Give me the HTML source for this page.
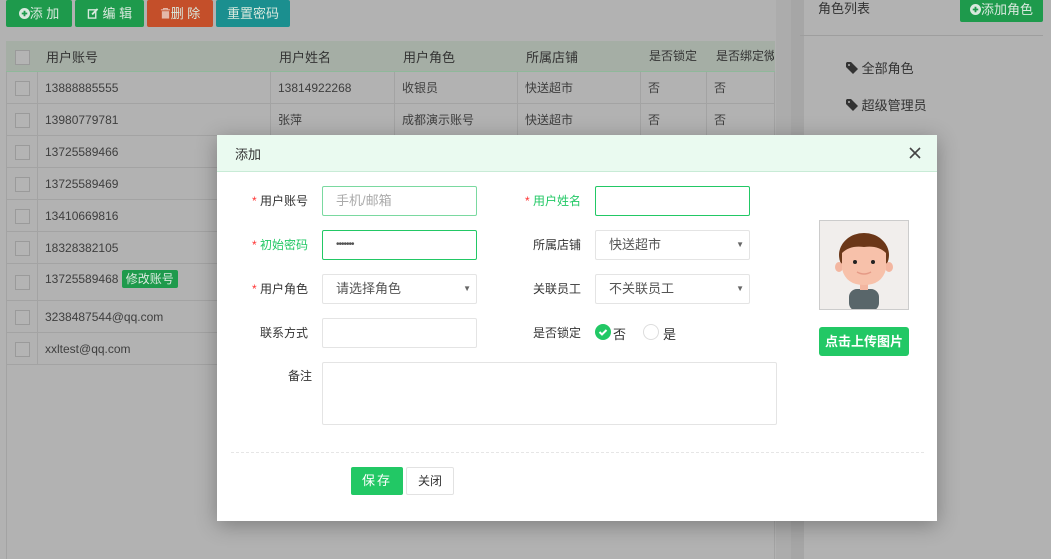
<!DOCTYPE html>
<html><head><meta charset="utf-8"><style>
*{box-sizing:border-box;margin:0;padding:0}
body{width:1051px;height:559px;overflow:hidden;background:#b2b2b2;font-family:"Liberation Sans","Noto Sans CJK SC",sans-serif;font-size:12px;color:#333;position:relative}
.a{position:absolute}
.btn{position:absolute;color:#d9e9de;font-size:13px;border-radius:2px;text-align:center;line-height:27px;height:27px;top:0}
.cell{position:absolute;height:32px;line-height:32px;border-right:1px solid #a3a3a3;border-bottom:1px solid #a3a3a3;color:#3e3e3e;padding-left:7px;white-space:nowrap;overflow:hidden}
.cb{position:absolute;width:15px;height:15px;border:1px solid #9a9a9a;background:#b4b4b4}
.lbl{position:absolute;text-align:right;width:90px;color:#333;font-size:12px;line-height:30px}
.in{position:absolute;width:155px;height:30px;border:1px solid #e4e4e4;border-radius:2px;background:#fff;line-height:28px;padding-left:13px;font-size:13px;color:#555}
.g{border-color:#22c865}
.arr{position:absolute;right:5px;top:0;font-size:8px;color:#666}
.st{color:#f33}
svg.i{vertical-align:-1px}
</style></head><body>
<!-- toolbar -->
<div class="btn" style="left:6px;width:66px;background:#1e9a4c"><svg class="i" width="11" height="11" viewBox="0 0 12 12"><circle cx="6" cy="6" r="6" fill="#d9e9de"/><path d="M3 6h6M6 3v6" stroke="#1e9a4c" stroke-width="2"/></svg>添 加</div>
<div class="btn" style="left:75px;width:69px;background:#1e9a4c"><svg class="i" width="12" height="11" viewBox="0 0 12 12"><rect x="1" y="2" width="8" height="9" fill="none" stroke="#d9e9de" stroke-width="1.5"/><path d="M5 7l6-6" stroke="#d9e9de" stroke-width="2"/></svg> 编 辑</div>
<div class="btn" style="left:147px;width:66px;background:#c44f2a"><svg class="i" width="11" height="11" viewBox="0 0 12 12"><path d="M1 2h10M4 2V0.5h4V2" stroke="#e4b8aa" stroke-width="1.3" fill="none"/><rect x="2" y="3.5" width="8" height="8" fill="#e4b8aa"/></svg>删 除</div>
<div class="btn" style="left:216px;width:74px;background:#1b8f8f">重置密码</div>

<!-- table -->
<div class="a" style="left:6px;top:41px;width:769px;height:518px;border-left:1px solid #a3a3a3;border-right:1px solid #a3a3a3"></div>
<div class="a" style="left:6px;top:41px;width:769px;height:31px;background:#a5aea5;border-bottom:1px solid #8fb89a"></div>
<div class="cb" style="left:15px;top:50px"></div>
<div class="a" style="left:46px;top:47px;color:#333;font-size:13px">用户账号</div>
<div class="a" style="left:279px;top:47px;color:#333;font-size:13px">用户姓名</div>
<div class="a" style="left:403px;top:47px;color:#333;font-size:13px">用户角色</div>
<div class="a" style="left:526px;top:47px;color:#333;font-size:13px">所属店铺</div>
<div class="a" style="left:649px;top:47px;color:#333;font-size:12px">是否锁定</div>
<div class="a" style="left:716px;top:47px;color:#333;font-size:12px;width:58px;overflow:hidden;white-space:nowrap">是否绑定微信</div>

<div id="rows"></div>
<script>
var d=[["13888885555","13814922268","收银员","快送超市","否","否"],["13980779781","张萍","成都演示账号","快送超市","否","否"],["13725589466","","","","",""],["13725589469","","","","",""],["13410669816","","","","",""],["18328382105","","","","",""],["13725589468","","","","",""],["3238487544@qq.com","","","","",""],["xxltest@qq.com","","","","",""]];
var cols=[6,38,271,395,518,641,707,775],tops=[72,104,136,168,200,232,264,301,333,365],h="";
for(var r=0;r<9;r++){var t=tops[r],hh=tops[r+1]-t;
h+='<div class="cell" style="left:6px;top:'+t+'px;width:32px;height:'+hh+'px;border-left:1px solid #a3a3a3"></div><div class="cb" style="left:15px;top:'+(t+(hh-15)/2)+'px"></div>';
for(var c=0;c<6;c++){h+='<div class="cell" style="left:'+cols[c+1]+'px;top:'+t+'px;width:'+(cols[c+2]-cols[c+1])+'px;height:'+hh+'px;line-height:'+(r==6?30:32)+'px">'+d[r][c]+(r==6&&c==0?' <span style="background:#1e9a4c;color:#d9e9de;padding:2px 4px;border-radius:2px;font-size:12px">修改账号</span>':'')+'</div>';}}
document.getElementById('rows').innerHTML=h;
</script>

<!-- right panel -->
<div class="a" style="left:776px;top:0;width:15px;height:559px;background:#acacac"></div>
<div class="a" style="left:791px;top:0;width:13px;height:559px;background:#a6a6a6"></div>
<div class="a" style="left:818px;top:-2px;font-size:13px;color:#333">角色列表</div>
<div class="a" style="left:960px;top:-4px;width:83px;height:26px;background:#1e9a4c;border-radius:2px;color:#d9e9de;font-size:13px;line-height:24px;text-align:center;padding-top:2px"><svg class="i" width="11" height="11" viewBox="0 0 12 12"><circle cx="6" cy="6" r="6" fill="#d9e9de"/><path d="M3 6h6M6 3v6" stroke="#1e9a4c" stroke-width="2"/></svg>添加角色</div>
<div class="a" style="left:800px;top:35px;width:243px;height:1px;background:#9e9e9e"></div>
<div class="a" style="left:846px;top:58px;font-size:13px;color:#333"><svg class="i" width="12" height="12" viewBox="0 0 12 12"><path d="M0 1v4l7 7 5-5-7-7H1z" fill="#333"/><circle cx="3" cy="3" r="1" fill="#b2b2b2"/></svg> 全部角色</div>
<div class="a" style="left:846px;top:95px;font-size:13px;color:#333"><svg class="i" width="12" height="12" viewBox="0 0 12 12"><path d="M0 1v4l7 7 5-5-7-7H1z" fill="#333"/><circle cx="3" cy="3" r="1" fill="#b2b2b2"/></svg> 超级管理员</div>

<!-- modal -->
<div class="a" style="left:217px;top:135px;width:720px;height:386px;background:#fff;box-shadow:0 4px 20px rgba(0,0,0,.3)">
 <div class="a" style="left:0;top:0;width:720px;height:37px;background:#eafaf0;border-bottom:1px solid #c8ebd6"></div>
 <div class="a" style="left:18px;top:9px;font-size:13px;color:#333">添加</div>
 <svg class="a" style="left:692px;top:12px" width="12" height="12" viewBox="0 0 12 12"><path d="M1 1l10 10M11 1L1 11" stroke="#444" stroke-width="1.6"/></svg>

 <div class="lbl" style="left:1px;top:51px"><span class="st">*</span> 用户账号</div>
 <div class="in" style="left:105px;top:51px;border-color:#7ad9a0;color:#aaa">手机/邮箱</div>
 <div class="lbl" style="left:274px;top:51px;color:#22c865"><span class="st">*</span> 用户姓名</div>
 <div class="in g" style="left:378px;top:51px"></div>

 <div class="lbl" style="left:1px;top:95px;color:#22c865"><span class="st">*</span> 初始密码</div>
 <div class="in g" style="left:105px;top:95px;font-size:10px;letter-spacing:-1px">•••••••</div>
 <div class="lbl" style="left:274px;top:95px">所属店铺</div>
 <div class="in" style="left:378px;top:95px">快送超市<span class="arr">▼</span></div>

 <div class="lbl" style="left:1px;top:139px"><span class="st">*</span> 用户角色</div>
 <div class="in" style="left:105px;top:139px">请选择角色<span class="arr">▼</span></div>
 <div class="lbl" style="left:274px;top:139px">关联员工</div>
 <div class="in" style="left:378px;top:139px">不关联员工<span class="arr">▼</span></div>

 <div class="lbl" style="left:1px;top:183px">联系方式</div>
 <div class="in" style="left:105px;top:183px"></div>
 <div class="lbl" style="left:274px;top:183px">是否锁定</div>
 <svg class="a" style="left:378px;top:189px" width="16" height="16" viewBox="0 0 16 16"><circle cx="8" cy="8" r="8" fill="#22c865"/><path d="M4.5 8l2.5 2.5 4.5-4.5" stroke="#fff" stroke-width="2" fill="none"/></svg>
 <div class="a" style="left:396px;top:189px;font-size:13px;color:#333">否</div>
 <div class="a" style="left:426px;top:189px;width:16px;height:16px;border-radius:50%;border:1px solid #ddd"></div>
 <div class="a" style="left:446px;top:189px;font-size:13px;color:#333">是</div>

 <div class="lbl" style="left:5px;top:226px">备注</div>
 <div class="in" style="left:105px;top:227px;width:455px;height:63px"></div>

 <div class="a" style="left:14px;top:317px;width:693px;border-top:1px dashed #e6e6e6"></div>
 <div class="a" style="left:134px;top:332px;width:52px;height:28px;background:#22c865;border-radius:2px;color:#fff;font-size:13px;line-height:28px;text-align:center;letter-spacing:2px">保存</div>
 <div class="a" style="left:189px;top:332px;width:48px;height:28px;border:1px solid #e2e2e2;border-radius:2px;color:#333;font-size:12px;line-height:26px;text-align:center">关闭</div>

 <div class="a" style="left:602px;top:85px;width:90px;height:90px;border:1px solid #ccc;background:#f1eeec;overflow:hidden">
  <svg width="88" height="88" viewBox="0 0 88 88">
   <rect x="29" y="68" width="30" height="22" rx="8" fill="#59666a"/>
   <rect x="40" y="56" width="8" height="13" fill="#f3b6a0"/>
   <ellipse cx="44" cy="34" rx="25" ry="22" fill="#6b3718"/>
   <ellipse cx="19" cy="46" rx="4" ry="5" fill="#f3b6a0"/>
   <ellipse cx="69" cy="46" rx="4" ry="5" fill="#f3b6a0"/>
   <path d="M22 32 Q30 24 44 26 Q58 24 66 32 L66 48 Q62 64 44 64 Q26 64 22 48Z" fill="#f7c1aa"/>
   <circle cx="35" cy="41" r="2" fill="#222"/><circle cx="53" cy="41" r="2" fill="#222"/>
   <path d="M37 51 Q44 55 51 51" stroke="#e59a86" stroke-width="1.5" fill="none"/>
  </svg>
 </div>
 <div class="a" style="left:602px;top:192px;width:90px;height:29px;background:#22c865;border-radius:3px;color:#fff;font-size:13px;line-height:29px;text-align:center;font-weight:bold">点击上传图片</div>
</div>
</body></html>
